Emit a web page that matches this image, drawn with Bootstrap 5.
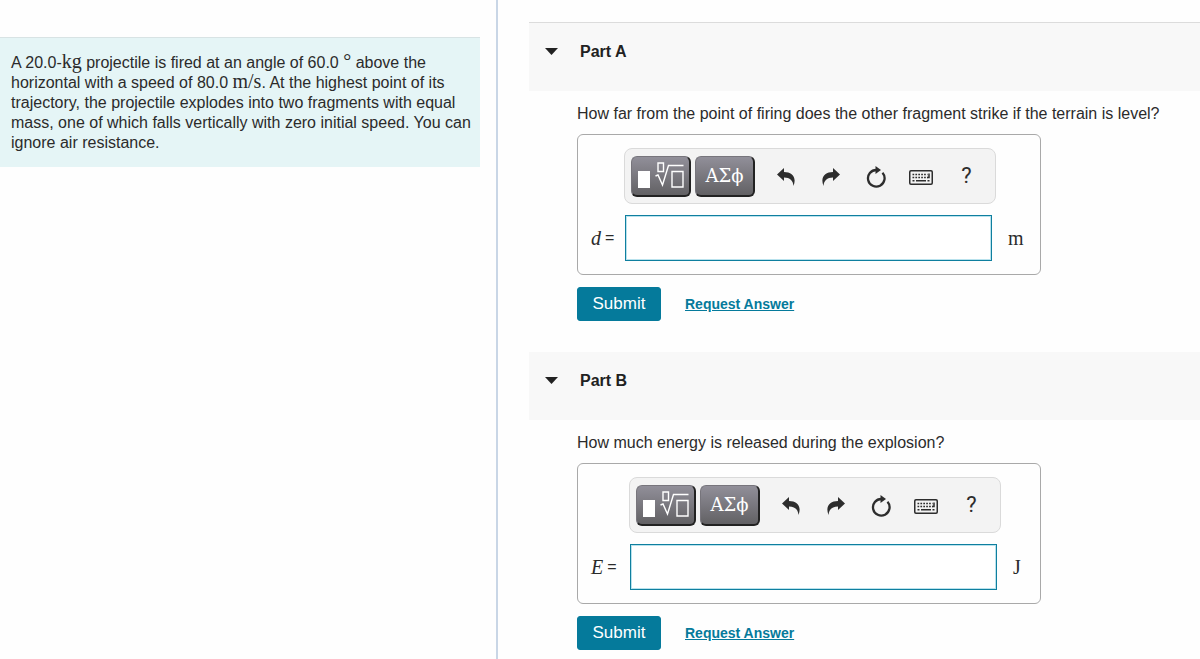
<!DOCTYPE html>
<html lang="en">
<head>
<meta charset="utf-8">
<meta name="viewport" content="width=device-width, initial-scale=1">
<title>Projectile explosion</title>
<link href="https://cdn.jsdelivr.net/npm/bootstrap@5.3.0/dist/css/bootstrap.min.css" rel="stylesheet">
<style>
body { font-family: "Liberation Sans", Arial, sans-serif; font-size: 16px; line-height: 20px; color: #2b2b2b; background: #fefefe; }
.prompt-pane { flex: 0 0 41.5%; border-right: 2px solid #c9d6e6; padding: 37px 16px 0 0; }
.prompt-text { background: #e5f5f6; border-top: 1px solid #d8e3e4; padding: 15px 0 14px 11px; }
.tex { font-family: "Liberation Serif", serif; font-size: 20px; line-height: 16px; }
.answer-pane { padding: 22px 0 8px 31px; min-width: 0; }
.part-head { background: #f8f8f8; height: 68px; padding: 19px 16px; gap: 22px; }
.part-head.first-part { height: 69px; border-top: 1px solid #dcdcdc; }
.part-head h2 { font-size: 16px; line-height: 20px; font-weight: 700; color: #222; }
.part-body { padding: 12px 16px 31px 48px; }
.part-body p { line-height: 22px; }
.answer-box { max-width: 464px; border: 1px solid #a9a9a9; border-radius: 6px; padding: 13px; margin-top: 9px; }
.eq-label { flex: 0 0 33px; }
.eq-label.wide { flex-basis: 38px; }
.eq-label i, .unit { font-family: "Liberation Serif", serif; font-size: 20px; }
.fields { flex: 0 1 372px; min-width: 0; }
.tools { height: 56px; border: 1px solid #dadada; border-radius: 8px; background: #f3f3f3; padding: 0 6px; }
.tpl { flex: none; width: 60px; height: 41px; padding: 0; border: 1px solid #77757c; border-right: 2px solid #222; border-bottom: 2px solid #222; border-radius: 6px; color: #fff; background: linear-gradient(#918f99, #626164); font: 18px/36px "DejaVu Serif", serif; }
.tool { flex: 0 1 46px; width: 46px; height: 40px; padding: 0; border: 0; background: none; color: #2d2d2d; font: 22px/40px Roboto, sans-serif; }
.entry { height: 46px; width: 367px; max-width: 100%; border: 1px solid #0f7f9f; border-radius: 0; background: #fff; margin: 11px 0 0 1px; box-shadow: inset 0 0 0 1px #b9e2ed; }
.side-row { height: 46px; }
.btn-submit { --bs-btn-color: #fff; --bs-btn-bg: #057a9b; --bs-btn-border-color: #057a9b; --bs-btn-hover-color: #fff; --bs-btn-hover-bg: #04627d; width: 84px; height: 34px; padding: 0; border-radius: 3px; font-size: 17px; line-height: 20px; }
.request { color: #057a9b; font-size: 14px; font-weight: 700; }
</style>
</head>
<body>
<svg class="d-none" aria-hidden="true">
  <symbol id="i-template" viewBox="0 0 46 30"><path fill="#fff" d="M0 10h12v17H0z"/><path fill="none" stroke="#fff" stroke-width="1.4" d="M20 2h5.500v8.500H20zM17.500 15l2.500-1 4.500 10L30.500 4.500h15M34 10.500h11v15.500H34z"/></symbol>
  <symbol id="i-undo" viewBox="0 0 18 18"><path fill="currentColor" d="M0 6.500 7 0v4c8 0 13 5 9.500 14C16 12.500 13 9.500 7 9.500V13z"/></symbol>
  <symbol id="i-reset" viewBox="0 0 20 22"><path fill="none" stroke="currentColor" stroke-width="2.300" d="M10.500 4A8.300 8.300 0 1 0 16.500 6.800"/><path fill="currentColor" d="M9.500 0l5.500 4-5.500 4z"/></symbol>
  <symbol id="i-keys" viewBox="0 0 24 15"><rect x=".75" y=".75" width="22.500" height="13.500" rx="1.200" fill="none" stroke="currentColor" stroke-width="1.500"/><path fill="none" stroke="currentColor" stroke-width="1.500" stroke-dasharray="1.700 1.200" d="M3.500 4.500h15M3.500 7.500h15"/><path fill="none" stroke="currentColor" stroke-width="1.500" d="M20 3.500v4h-2M3.500 10.700h2M7 10.700h10M18.500 10.700h2"/></symbol>
</svg>
<div class="d-flex min-vh-100">
  <aside class="prompt-pane">
    <div class="prompt-text">A 20.0-<span class="tex">kg</span> projectile is fired at an angle of 60.0&nbsp;<span class="tex">°</span> above the<br>horizontal with a speed of 80.0 <span class="tex">m/s</span>. At the highest point of its<br>trajectory, the projectile explodes into two fragments with equal<br>mass, one of which falls vertically with zero initial speed. You can<br>ignore air resistance.</div>
  </aside>
  <main class="answer-pane flex-grow-1">
    <section>
      <div class="part-head first-part d-flex align-items-start">
        <svg class="mt-1" width="13" height="12" viewBox="0 0 13 12" aria-hidden="true"><path fill="#222" d="M0 2h13L6.500 9z"/></svg>
        <h2 class="m-0">Part A</h2>
      </div>
      <div class="part-body">
        <p class="m-0">How far from the point of firing does the other fragment strike if the terrain is level?</p>
        <div class="answer-box d-flex align-items-end">
          <label class="eq-label side-row d-flex align-items-center gap-1" for="ans-d"><i>d</i> =</label>
          <div class="fields">
            <div class="tools d-flex align-items-center">
              <button class="tpl me-1 d-flex align-items-center justify-content-center" type="button" aria-label="Templates"><svg width="46" height="30"><use href="#i-template"/></svg></button>
              <button class="tpl" type="button">ΑΣϕ</button>
              <button class="tool ms-2" type="button" aria-label="Undo"><svg width="18" height="18"><use href="#i-undo"/></svg></button>
              <button class="tool" type="button" aria-label="Redo"><svg width="18" height="18" viewBox="0 0 18 18"><g transform="matrix(-1 0 0 1 18 0)"><use href="#i-undo" width="18" height="18"/></g></svg></button>
              <button class="tool" type="button" aria-label="Reset"><svg width="20" height="22"><use href="#i-reset"/></svg></button>
              <button class="tool" type="button" aria-label="Keyboard shortcuts"><svg width="24" height="15"><use href="#i-keys"/></svg></button>
              <button class="tool" type="button">?</button>
            </div>
            <input class="entry d-block px-2" id="ans-d" type="text">
          </div>
          <span class="unit side-row d-flex align-items-center ms-2 ps-1">m</span>
        </div>
        <div class="d-flex align-items-center gap-4 mt-2 pt-1">
          <button class="btn btn-submit" type="button">Submit</button>
          <a class="request" href="#">Request Answer</a>
        </div>
      </div>
    </section>
    <section>
      <div class="part-head d-flex align-items-start">
        <svg class="mt-1" width="13" height="12" viewBox="0 0 13 12" aria-hidden="true"><path fill="#222" d="M0 2h13L6.500 9z"/></svg>
        <h2 class="m-0">Part B</h2>
      </div>
      <div class="part-body pb-0">
        <p class="m-0">How much energy is released during the explosion?</p>
        <div class="answer-box d-flex align-items-end">
          <label class="eq-label wide side-row d-flex align-items-center gap-1" for="ans-e"><i>E</i> =</label>
          <div class="fields">
            <div class="tools d-flex align-items-center">
              <button class="tpl me-1 d-flex align-items-center justify-content-center" type="button" aria-label="Templates"><svg width="46" height="30"><use href="#i-template"/></svg></button>
              <button class="tpl" type="button">ΑΣϕ</button>
              <button class="tool ms-2" type="button" aria-label="Undo"><svg width="18" height="18"><use href="#i-undo"/></svg></button>
              <button class="tool" type="button" aria-label="Redo"><svg width="18" height="18" viewBox="0 0 18 18"><g transform="matrix(-1 0 0 1 18 0)"><use href="#i-undo" width="18" height="18"/></g></svg></button>
              <button class="tool" type="button" aria-label="Reset"><svg width="20" height="22"><use href="#i-reset"/></svg></button>
              <button class="tool" type="button" aria-label="Keyboard shortcuts"><svg width="24" height="15"><use href="#i-keys"/></svg></button>
              <button class="tool" type="button">?</button>
            </div>
            <input class="entry d-block px-2" id="ans-e" type="text">
          </div>
          <span class="unit side-row d-flex align-items-center ms-2 ps-1">J</span>
        </div>
        <div class="d-flex align-items-center gap-4 mt-2 pt-1">
          <button class="btn btn-submit" type="button">Submit</button>
          <a class="request" href="#">Request Answer</a>
        </div>
      </div>
    </section>
  </main>
</div>
<script src="https://cdn.jsdelivr.net/npm/bootstrap@5.3.0/dist/js/bootstrap.bundle.min.js"></script>
</body>
</html>
